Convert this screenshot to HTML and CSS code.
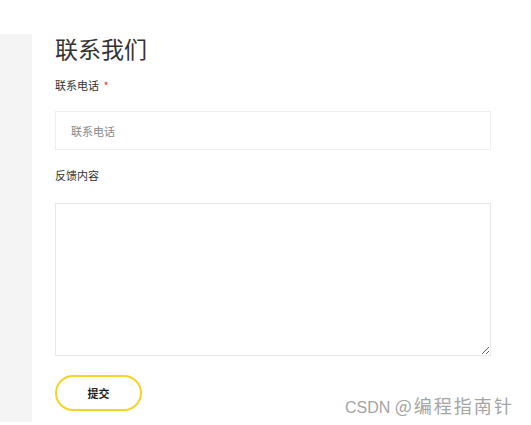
FILE: index.html
```html
<!DOCTYPE html>
<html lang="zh-CN">
<head>
    <meta charset="UTF-8">
    <title>联系我们</title>
    <link rel="stylesheet" href="styles.css">
</head>
<body>

<div class="page">
    <div class="sidebar"></div>
    <div class="content">
        <h1>联系我们</h1>

        <label class="field-label" for="phone">联系电话 <span class="required">*</span></label>
        <input type="text" id="phone" class="text-input" placeholder="联系电话">

        <label class="field-label feedback-label" for="feedback">反馈内容</label>
        <textarea id="feedback" class="text-area"></textarea>

        <button class="submit-btn">提交</button>
    </div>
</div>

<div class="watermark">CSDN <span class="watermark-name">@编程指南针</span></div>

</body>
</html>
```

FILE: styles.css
```css
body {
    margin: 0;
    font-family: "Noto Sans CJK SC", "Liberation Sans", sans-serif;
    background-color: #fff;
    color: #333;
    width: 531px;
    height: 425px;
    overflow: hidden;
    position: relative;
}
.page {
    display: flex;
    padding-top: 34px;
    height: 388px;
}
.sidebar {
    width: 32px;
    background-color: #f4f4f4;
}
.content {
    display: flex;
    flex-direction: column;
    align-items: flex-start;
    padding-left: 23px;
    width: 436px;
}
h1 {
    font-size: 23px;
    font-weight: 400;
    color: #333;
    margin: 0;
    line-height: 28px;
}
.field-label {
    font-size: 11px;
    color: #333;
    margin-top: 16px;
    line-height: 14px;
}
.required {
    color: #e4393c;
    margin-left: 2px;
}
.text-input {
    box-sizing: border-box;
    width: 436px;
    height: 39px;
    margin-top: 19px;
    padding: 0 15px;
    border: 1px solid #eee;
    font-family: inherit;
    font-size: 11px;
    outline: none;
}
.text-input::placeholder {
    color: #888;
}
.feedback-label {
    margin-top: 18px;
}
.text-area {
    box-sizing: border-box;
    width: 436px;
    height: 153px;
    margin-top: 21px;
    border: 1px solid #e8e8e8;
    font-family: inherit;
    outline: none;
}
.submit-btn {
    margin-top: 19px;
    width: 87px;
    height: 36px;
    border: 2px solid #f5d327;
    border-radius: 18px;
    background-color: #fff;
    font-family: inherit;
    font-size: 11px;
    font-weight: 700;
    color: #222;
    cursor: pointer;
}
.watermark {
    position: absolute;
    left: 345px;
    top: 394px;
    font-size: 16px;
    line-height: 22px;
    color: #a4a4a4;
    font-family: "Liberation Sans", "Noto Sans CJK SC", sans-serif;
}
.watermark-name {
    font-family: "Noto Sans CJK SC", sans-serif;
    font-size: 18px;
    letter-spacing: 2px;
}
```
